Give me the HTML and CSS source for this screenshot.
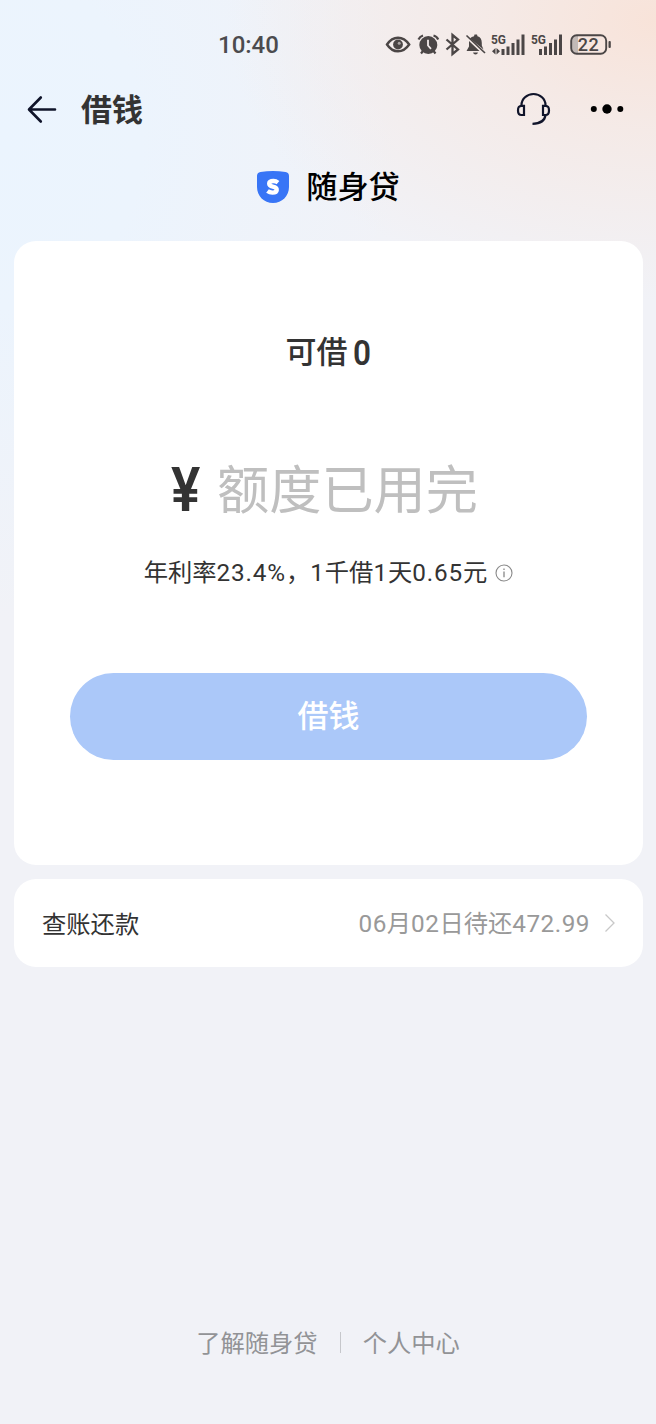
FILE: index.html
```html
<!DOCTYPE html>
<html lang="zh-CN">
<head>
<meta charset="utf-8">
<title>借钱</title>
<link rel="stylesheet" href="styles.css">
</head>
<body>
<div class="page">
  <header class="status">
    <span class="clock">10:40</span>
    <svg class="status-icons" width="230" height="30" viewBox="383 30 230 30">
      <path d="M387 44.500Q391.500 37.700 398 37.700T409.200 44.500Q404.500 51.300 398 51.300T387 44.500Z" fill="none" stroke="#4b4646" stroke-width="2.400"/>
      <circle cx="398" cy="44.500" r="4.900" fill="#4b4646"/>
      <circle cx="399.200" cy="43.300" r="1.500" fill="#aaa4a4"/>
      <circle cx="428.300" cy="45" r="9" fill="#4b4646"/>
      <path d="M418.500 39.500Q419.800 36.500 423 35.500M438.200 39.500Q437 36.500 433.500 35.500M423 51L421 53.500M433.500 51L435.500 53.500" fill="none" stroke="#4b4646" stroke-width="2.200"/>
      <path d="M428 39.800V45.500L431 48.800" fill="none" stroke="#f3ebeb" stroke-width="1.800"/>
      <path d="M446.500 39.500L458 49.500L452.500 54V35L458 39.500L446.500 49.500" fill="none" stroke="#4b4646" stroke-width="2.300"/>
      <path d="M470 38.500Q471.500 36.500 474 36.300L474.500 34.500H477L477.500 36.300Q481.800 37.500 481.800 43V45.500L483.500 49.500ZM469 41L479.500 51H466.500L469 46.500ZM473 52.500H478Q477.500 54.500 475.500 54.500T473 52.500Z" fill="#4b4646"/>
      <path d="M466.500 35.500L485 53" stroke="#4b4646" stroke-width="1.700"/>
      <text class="net" x="491" y="44" textLength="15" lengthAdjust="spacingAndGlyphs">5G</text>
      <path d="M492 51.300L495.500 48V54.600ZM500 51.300L496.500 48V54.600Z" fill="#4b4646"/>
      <path d="M503 49V55M508 46.500V55M513 43V55M518 39.500V55M523 34.500V55" stroke="#4b4646" stroke-width="3"/>
      <text class="net" x="531" y="44" textLength="15" lengthAdjust="spacingAndGlyphs">5G</text>
      <path d="M540.500 49V55M545.500 46.500V55M550.500 43V55M555.500 39.500V55M560.500 34.500V55" stroke="#4b4646" stroke-width="3"/>
      <path d="M578 36V53H576Q571.500 53 571.500 48.500V40.500Q571.500 36 576 36Z" fill="#c2b9b6"/>
      <rect x="571.200" y="35.200" width="35" height="18.600" rx="5.500" fill="none" stroke="#4b4646" stroke-width="1.900"/>
      <rect x="608.500" y="41" width="2.300" height="7" rx="1" fill="#4b4646"/>
      <text class="battery" x="588.500" y="51" text-anchor="middle">22</text>
    </svg>
  </header>

  <nav class="nav">
    <svg class="back" width="32" height="32" viewBox="0 0 32 32"><path d="M15.800 4.500L4 16.500L15.800 28.500M4.500 16.500H30" fill="none" stroke="#10142a" stroke-width="2.600" stroke-linecap="round" stroke-linejoin="round"/></svg>
    <h1 class="title">借钱</h1>
    <svg class="headset" width="38" height="36" viewBox="0 0 38 36">
      <g fill="none" stroke="#10142a" stroke-width="2.200">
        <path d="M7.500 14.500V14A12 11 0 0 1 31.500 14V14.500M31.500 24Q30.500 32.500 18.500 32.800"/>
        <path d="M10 14.800V24H7.500Q4 24 4 19.400T7.500 14.800ZM29 14.800V24H31.500Q35 24 35 19.400T31.500 14.800Z"/>
      </g>
    </svg>
    <svg class="more" width="34" height="12" viewBox="0 0 34 12"><circle cx="3.800" cy="6" r="3"/><circle cx="17" cy="6" r="4.700"/><circle cx="30.300" cy="6" r="3"/></svg>
  </nav>

  <div class="brand">
    <svg width="34" height="34" viewBox="0 0 34 34">
      <path d="M1 6Q1 2.500 4.500 2Q17 .2 29.500 2Q33 2.500 33 6V17C33 26 26 33 17 33S1 26 1 17Z" fill="#3875f6"/>
      <path d="M22 12.600Q20 11 17.500 11C11.800 11 12 15.700 16.800 16.600C22.300 17.600 21.800 22.600 16.500 22.600Q13.600 22.600 11.500 21" fill="none" stroke="#fff" stroke-width="4.400"/>
    </svg>
    <span class="brand-name">随身贷</span>
  </div>

  <main class="cards">
    <section class="loan">
      <div class="available">可借<span class="zero">0</span></div>
      <div class="amount"><span class="yen">¥</span><span class="used">额度已用完</span></div>
      <div class="rate"><span>年利率<b class="num">23.4%</b>，<b class="num">1</b>千借<b class="num">1</b>天<b class="num">0.65</b>元</span>
        <svg width="18" height="18" viewBox="0 0 18 18"><circle cx="9" cy="9" r="8" fill="none" stroke="#888" stroke-width="1.100"/><path d="M9 7.500V13.200M9 4.600V6" stroke="#888" stroke-width="1.300"/></svg>
      </div>
      <button class="borrow">借钱</button>
    </section>
    <section class="bill">
      <span>查账还款</span>
      <span class="due"><b class="num">06</b>月<b class="num">02</b>日待还<b class="num">472.99</b></span>
      <svg width="12" height="20" viewBox="0 0 12 20"><path d="M1.500 1.500L10 10L1.500 18.500" fill="none" stroke="#c8c8c8" stroke-width="1.300"/></svg>
    </section>
  </main>

  <footer class="footer"><span>了解随身贷</span><i class="divider"></i><span>个人中心</span></footer>
</div>
</body>
</html>
```

FILE: styles.css
```css
* { box-sizing: border-box; }
body { margin: 0; }
.page {
  display: flex;
  flex-direction: column;
  width: 656px;
  height: 1424px;
  overflow: hidden;
  font-family: "Noto Sans CJK SC", sans-serif;
  color: #333;
  background:
    radial-gradient(ellipse 430px 280px at 656px 20px, #f8e3d9 0%, rgba(246, 231, 225, .75) 38%, rgba(244, 238, 240, 0) 100%),
    radial-gradient(ellipse 400px 480px at 0 140px, #ebf4fe 0%, #ecf4fd 35%, rgba(240, 242, 248, 0) 100%),
    #f1f2f7;
}
.status {
  display: flex;
  align-items: center;
  height: 60px;
  padding: 30px 43px 0 218px;
  justify-content: space-between;
}
.clock {
  font: 500 24px/30px Roboto, sans-serif;
  letter-spacing: 0;
  color: #4b4b4e;
}
.status-icons { display: block; }
.net { font: 700 13px Roboto, sans-serif; fill: #4b4646; }
.battery { font: 500 18px Roboto, sans-serif; letter-spacing: .5px; fill: #4b4646; }
.nav {
  display: flex;
  align-items: center;
  height: 98px;
  padding: 0 32px 0 25px;
}
.title {
  flex: 1;
  margin: 0 0 0 24px;
  padding-bottom: 2px;
  font-size: 31px;
  line-height: 46px;
  font-weight: 700;
}
.more { margin-left: 38px; }
.brand {
  display: flex;
  align-items: center;
  justify-content: center;
  gap: 16px;
  height: 58px;
  margin-bottom: 25px;
}
.brand-name { padding-bottom: 4px; font-size: 31.200px; line-height: 46px; font-weight: 500; color: #000; }
.cards { display: flex; flex-direction: column; gap: 14px; padding: 0 13px 0 14px; }
.loan {
  display: flex;
  flex-direction: column;
  align-items: center;
  height: 624px;
  padding-top: 85px;
  border-radius: 22px;
  background: #fff;
}
.available { display: flex; height: 50px; font-size: 31px; line-height: 48px; font-weight: 500; }
.zero { margin-left: 4px; font: 600 35px/55px Roboto, sans-serif; transform: scaleX(.9); }
.amount { display: flex; align-items: center; height: 80px; margin-top: 74px; padding-right: 8px; }
.yen { width: 46px; font: 600 61px/82px Roboto, sans-serif; transform: scaleX(.9); transform-origin: left; }
.used { padding-bottom: 8px; font-size: 52.200px; line-height: 80px; color: #bfbfbf; }
.rate {
  display: flex;
  align-items: center;
  gap: 8px;
  height: 36px;
  margin-top: 25px;
  font-size: 24.300px;
  line-height: 36px;
}
.rate > span { padding-bottom: 3px; }
.num { font-family: Roboto, sans-serif; font-weight: 400; letter-spacing: .5px; }
.rate .num { letter-spacing: .850px; }
.borrow {
  width: 517px;
  height: 87px;
  margin-top: 82px;
  padding: 0 0 6px;
  border: 0;
  border-radius: 44px;
  background: #abc8f9;
  color: #fff;
  font: 500 31px/46px "Noto Sans CJK SC", sans-serif;
}
.bill {
  display: flex;
  align-items: center;
  height: 88px;
  padding: 0 27px 0 28px;
  border-radius: 22px;
  background: #fff;
  font-size: 24.300px;
  line-height: 36px;
}
.bill > span { padding-bottom: 1px; }
.due { margin-left: auto; margin-right: 14px; color: #999; }
.footer {
  display: flex;
  align-items: center;
  justify-content: center;
  gap: 22px;
  height: 36px;
  margin-top: 357px;
  font-size: 24.300px;
  line-height: 36px;
  color: #929396;
}
.divider { width: 1px; height: 21px; background: #c6c7cb; }
```
